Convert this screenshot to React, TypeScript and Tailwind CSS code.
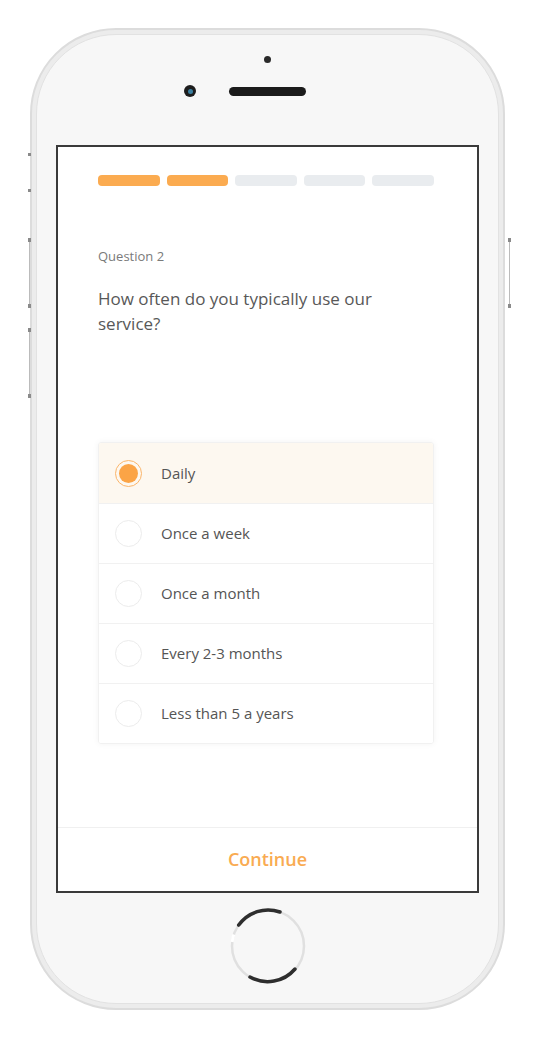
export default function App() {
  const options = ["Daily", "Once a week", "Once a month", "Every 2-3 months", "Less than 5 a years"];
  return (
    <div
      className="w-[533px] h-[1041px] bg-white pt-[28px] pl-[30px]"
      style={{ fontFamily: '"Open Sans", "Noto Sans", sans-serif' }}
    >
      <div className="relative w-[475px] h-[982px] rounded-[86px] border-2 border-[#dcdcdc] bg-[#ececec] p-[4px]">
        {/* side buttons */}
        <div className="absolute left-[-4px] top-[123px] w-[3px] h-[39px] flex flex-col justify-between items-center">
          <div className="w-[3px] h-[3px] bg-[#8a8a8a]" />
          <div className="w-[3px] h-[3px] bg-[#8a8a8a]" />
        </div>
        <div className="absolute left-[-4px] top-[208px] w-[3px] h-[70px] flex flex-col justify-between items-center bg-[linear-gradient(#bbb,#bbb)] bg-no-repeat bg-[length:1px_100%] bg-center">
          <div className="w-[3px] h-[4px] bg-[#8a8a8a]" />
          <div className="w-[3px] h-[4px] bg-[#8a8a8a]" />
        </div>
        <div className="absolute left-[-4px] top-[298px] w-[3px] h-[70px] flex flex-col justify-between items-center bg-[linear-gradient(#bbb,#bbb)] bg-no-repeat bg-[length:1px_100%] bg-center">
          <div className="w-[3px] h-[4px] bg-[#8a8a8a]" />
          <div className="w-[3px] h-[4px] bg-[#8a8a8a]" />
        </div>
        <div className="absolute right-[-8px] top-[208px] w-[3px] h-[70px] flex flex-col justify-between items-center bg-[linear-gradient(#bbb,#bbb)] bg-no-repeat bg-[length:1px_100%] bg-center">
          <div className="w-[3px] h-[4px] bg-[#8a8a8a]" />
          <div className="w-[3px] h-[4px] bg-[#8a8a8a]" />
        </div>

        <div className="h-full rounded-[80px] border border-[#e2e2e2] bg-[#f7f7f7] flex flex-col items-center">
          {/* top */}
          <div className="h-[110px] flex flex-col items-center">
            <div className="mt-[21px] w-[7px] h-[7px] rounded-full bg-[#2a2a2a]" />
            <div className="mt-[22px] flex items-center">
              <div className="w-[12px] h-[12px] rounded-full bg-[#1d1d1d] flex items-center justify-center">
                <div className="w-[5px] h-[5px] rounded-full bg-[#3a7fa0]" />
              </div>
              <div className="w-[33px]" />
              <div className="w-[77px] h-[9px] rounded-full bg-[#1b1b1b]" />
              <div className="w-[33px]" />
              <div className="w-[12px]" />
            </div>
          </div>

          {/* screen */}
          <div className="w-[423px] h-[748px] border-2 border-[#3a3a3a] bg-white flex flex-col">
            <div className="pt-[28px] pl-[40px] pr-[43px]">
              <div className="flex gap-[7px]">
                <div className="flex-1 h-[11px] rounded-[4px] bg-[#fbab50]" />
                <div className="flex-1 h-[11px] rounded-[4px] bg-[#fbab50]" />
                <div className="flex-1 h-[11px] rounded-[4px] bg-[#e9ecef]" />
                <div className="flex-1 h-[11px] rounded-[4px] bg-[#e9ecef]" />
                <div className="flex-1 h-[11px] rounded-[4px] bg-[#e9ecef]" />
              </div>
              <div className="mt-[61px] text-[13px] leading-[18px] text-[#7a7a7a]">Question 2</div>
              <div className="mt-[21px] text-[17px] leading-[25px] text-[#585858]">
                How often do you typically use our service?
              </div>
              <div className="mt-[106px] border border-[#f1f1f1] shadow-[0_0_6px_rgba(0,0,0,0.05)] rounded-[3px] overflow-hidden">
                {options.map((o, i) => (
                  <div
                    key={o}
                    className={`h-[60px] flex items-center pl-[16px] ${i > 0 ? "border-t border-[#f1f1f1]" : ""} ${i === 0 ? "bg-[#fdf8f0]" : "bg-white"}`}
                  >
                    {i === 0 ? (
                      <div className="w-[27px] h-[27px] rounded-full border-[1.5px] border-[#fbb56a] flex items-center justify-center">
                        <div className="w-[19px] h-[19px] rounded-full bg-[#fba446]" />
                      </div>
                    ) : (
                      <div className="w-[27px] h-[27px] rounded-full border-[1.5px] border-[#ececec]" />
                    )}
                    <span className="ml-[19px] text-[15px] text-[#555555]">{o}</span>
                  </div>
                ))}
              </div>
            </div>
            <div className="mt-auto h-[64px] border-t border-[#f0f0f0] flex items-center justify-center">
              <span className="text-[18px] font-semibold text-[#f9ab52]">Continue</span>
            </div>
          </div>

          {/* home button */}
          <div className="mt-[15px]">
            <svg width="76" height="76" viewBox="0 0 76 76">
              <circle cx="38" cy="38" r="36" fill="none" stroke="#e0e0e0" strokeWidth="2.5" />
              <path d="M 2.2 34 A 36 36 0 0 1 3.8 26.5" fill="none" stroke="#ffffff" strokeWidth="3" />
              <path d="M 8.7 17.1 A 36 36 0 0 1 50 4" fill="none" stroke="#2e2e2e" strokeWidth="3.5" strokeLinecap="round" />
              <path d="M 65 61 A 36 36 0 0 1 20 69" fill="none" stroke="#2e2e2e" strokeWidth="3.5" strokeLinecap="round" />
            </svg>
          </div>
        </div>
      </div>
    </div>
  );
}
